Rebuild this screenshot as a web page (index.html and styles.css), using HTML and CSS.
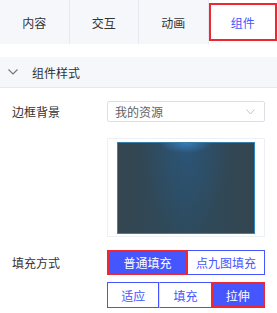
FILE: index.html
```html
<!DOCTYPE html>
<html lang="zh-CN">
<head>
    <meta charset="UTF-8">
    <title>组件样式</title>
    <link rel="stylesheet" href="styles.css">
</head>
<body>
    <div class="tabs">
        <div class="tab">内容</div>
        <div class="tab">交互</div>
        <div class="tab">动画</div>
        <div class="tab active">组件</div>
    </div>

    <div class="section-head">
        <svg class="arrow" width="10" height="6" viewBox="0 0 10 6"><path d="M0.5 0.5 L5 5 L9.5 0.5" fill="none" stroke="#777" stroke-width="1.2"/></svg>
        <span>组件样式</span>
    </div>

    <div class="row">
        <div class="label">边框背景</div>
        <div class="field">
            <div class="select">
                <span>我的资源</span>
                <svg width="9" height="6" viewBox="0 0 9 6"><path d="M0.5 0.5 L4.5 5 L8.5 0.5" fill="none" stroke="#c0c4cc" stroke-width="1"/></svg>
            </div>
            <div class="preview">
                <div class="preview-img"></div>
            </div>
        </div>
    </div>

    <div class="row fill-row">
        <div class="label">填充方式</div>
        <div class="field">
            <div class="btn-group">
                <button class="btn on">普通填充</button>
                <button class="btn">点九图填充</button>
            </div>
            <div class="btn-group three">
                <button class="btn">适应</button>
                <button class="btn">填充</button>
                <button class="btn on">拉伸</button>
            </div>
        </div>
    </div>
</body>
</html>
```

FILE: styles.css
```css
body {
    margin: 0;
    width: 277px;
    font-family: "Noto Sans CJK SC", "Noto Sans", sans-serif;
    font-size: 12px;
    color: #333;
    background: #fff;
}
.tabs {
    display: flex;
    height: 44px;
    background: #f5f7fa;
}
.tab {
    flex: 1;
    display: flex;
    align-items: center;
    justify-content: center;
    border-right: 1px solid #e6eaf0;
    position: relative;
}
.tab:last-child {
    border-right: none;
}
.tab.active {
    background: #fff;
    color: #4656ff;
}
.tab.active::after {
    content: "";
    position: absolute;
    left: 0;
    right: 0;
    top: 3px;
    bottom: 3px;
    border: 2px solid #ef2730;
}
.section-head {
    margin-top: 13px;
    height: 30px;
    background: #f5f7fa;
    border-bottom: 1px solid #e6e8ec;
    display: flex;
    align-items: center;
    padding-left: 8px;
}
.section-head .arrow {
    margin-right: 14px;
}
.row {
    display: flex;
    padding: 13px 12px 0 12px;
}
.label {
    width: 95px;
    line-height: 21px;
}
.field {
    width: 158px;
}
.select {
    height: 19px;
    border: 1px solid #dcdfe6;
    border-radius: 2px;
    display: flex;
    align-items: center;
    justify-content: space-between;
    padding: 0 9px 0 7px;
    color: #606266;
}
.preview {
    box-sizing: border-box;
    margin-top: 16px;
    height: 99px;
    border: 1px solid #edf0f5;
    padding: 3px 9px 2px 9px;
}
.preview-img {
    height: 90px;
    border: 1px solid #2b86c2;
    border-top-color: #3a7ea8;
    background:
        radial-gradient(ellipse 26px 10px at 50% 0, rgba(60, 140, 210, 0.7), rgba(60, 140, 210, 0) 100%),
        radial-gradient(ellipse 45px 90px at 50% 0, rgba(40, 100, 160, 0.4), rgba(40, 100, 160, 0) 100%),
        linear-gradient(90deg, #34454f 0%, #2d4b5e 50%, #34454f 100%);
}
.fill-row {
    padding-top: 13px;
}
.fill-row .label {
    line-height: 25px;
}
.btn-group {
    display: flex;
}
.btn-group.three {
    margin-top: 7px;
}
.btn {
    font-family: inherit;
    font-size: 12px;
    height: 25px;
    padding: 0;
    background: #fff;
    color: #4656ff;
    border: 1px solid #4656ff;
    cursor: pointer;
}
.btn-group .btn:first-child {
    width: 81px;
}
.btn-group .btn:last-child {
    flex: 1;
    border-left: none;
}
.btn-group.three .btn {
    flex: 1;
    width: auto;
    height: 26px;
}
.btn-group.three .btn:nth-child(2) {
    border-left: 1px solid #dcdfe6;
    border-right: none;
}
.btn.on {
    background: #4656ff;
    color: #fff;
    border: 2px solid #ef2730;
}
.btn-group .btn.on:last-child {
    border: 2px solid #ef2730;
}
```
